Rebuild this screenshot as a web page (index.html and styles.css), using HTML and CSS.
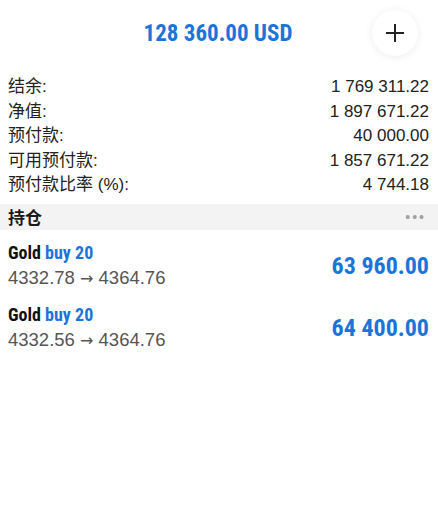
FILE: index.html
```html
<!DOCTYPE html>
<html lang="zh">
<head>
  <meta charset="UTF-8" />
  <meta name="viewport" content="width=device-width, initial-scale=1.0"/>
  <title>交易</title>
  <link rel="stylesheet" href="styles.css">
</head>
<body>

  <div class="top-bar">
    <div class="balance-title">128 360.00 USD</div>
    <button class="add-btn">
      <svg width="20" height="20" viewBox="0 0 20 20"><path d="M10 1v18M1 10h18" stroke="#222" stroke-width="2"/></svg>
    </button>
  </div>

  <div class="summary">
    <div class="row"><span>结余:</span><span>1 769 311.22</span></div>
    <div class="row"><span>净值:</span><span>1 897 671.22</span></div>
    <div class="row"><span>预付款:</span><span>40 000.00</span></div>
    <div class="row"><span>可用预付款:</span><span>1 857 671.22</span></div>
    <div class="row"><span>预付款比率 (%):</span><span>4 744.18</span></div>
  </div>

  <div class="section-head">
    <span>持仓</span>
    <span class="dots">•••</span>
  </div>

  <div class="positions">
    <div class="position">
      <div class="pos-info">
        <div class="pos-name">Gold <span class="blue">buy 20</span></div>
        <div class="pos-price">4332.78 <span class="arrow">→</span> 4364.76</div>
      </div>
      <div class="pos-profit">63 960.00</div>
    </div>
    <div class="position">
      <div class="pos-info">
        <div class="pos-name">Gold <span class="blue">buy 20</span></div>
        <div class="pos-price">4332.56 <span class="arrow">→</span> 4364.76</div>
      </div>
      <div class="pos-profit">64 400.00</div>
    </div>
  </div>

</body>
</html>
```

FILE: styles.css
```css
body {
  margin: 0;
  background: #fff;
  font-family: "Liberation Sans", "Noto Sans CJK SC", sans-serif;
  color: #1a1a1a;
  width: 438px;
}

.top-bar {
  position: relative;
  height: 66px;
  display: flex;
  align-items: center;
  justify-content: center;
}

.balance-title {
  font-family: "Liberation Sans Narrow", "Roboto Condensed", "Liberation Sans", sans-serif;
  font-weight: bold;
  font-size: 23px;
  color: #1b74d8;
  margin-left: -2px;
}

.add-btn {
  position: absolute;
  right: 20px;
  top: 10px;
  width: 46px;
  height: 46px;
  border-radius: 50%;
  border: none;
  background: #fff;
  box-shadow: 0 1px 8px rgba(0,0,0,0.08);
  display: flex;
  align-items: center;
  justify-content: center;
  padding: 0;
}

.summary {
  padding: 9px 9px 0 8px;
}

.row {
  display: flex;
  justify-content: space-between;
  font-size: 17px;
  line-height: 24.5px;
  color: #222;
}

.section-head {
  margin-top: 6px;
  height: 26px;
  background: #f3f3f3;
  display: flex;
  align-items: center;
  justify-content: space-between;
  padding: 0 12px 0 8px;
  font-size: 17px;
  font-weight: bold;
}

.dots {
  color: #a0a0a0;
  font-size: 14px;
  letter-spacing: 2px;
  font-weight: normal;
}

.positions {
  padding: 5px 9px 0 8px;
}

.position {
  display: flex;
  justify-content: space-between;
  align-items: center;
  height: 62px;
}

.pos-name {
  font-family: "Liberation Sans Narrow", "Roboto Condensed", "Liberation Sans", sans-serif;
  font-weight: bold;
  font-size: 18px;
  line-height: 24px;
  color: #111;
}

.blue {
  color: #1b74d8;
}

.pos-price {
  font-size: 18.5px;
  line-height: 25px;
  color: #555;
}

.arrow {
  font-family: "DejaVu Sans", sans-serif;
  font-size: 16px;
}

.pos-profit {
  font-family: "Liberation Sans Narrow", "Roboto Condensed", "Liberation Sans", sans-serif;
  font-weight: bold;
  font-size: 24px;
  color: #1b74d8;
}
```
